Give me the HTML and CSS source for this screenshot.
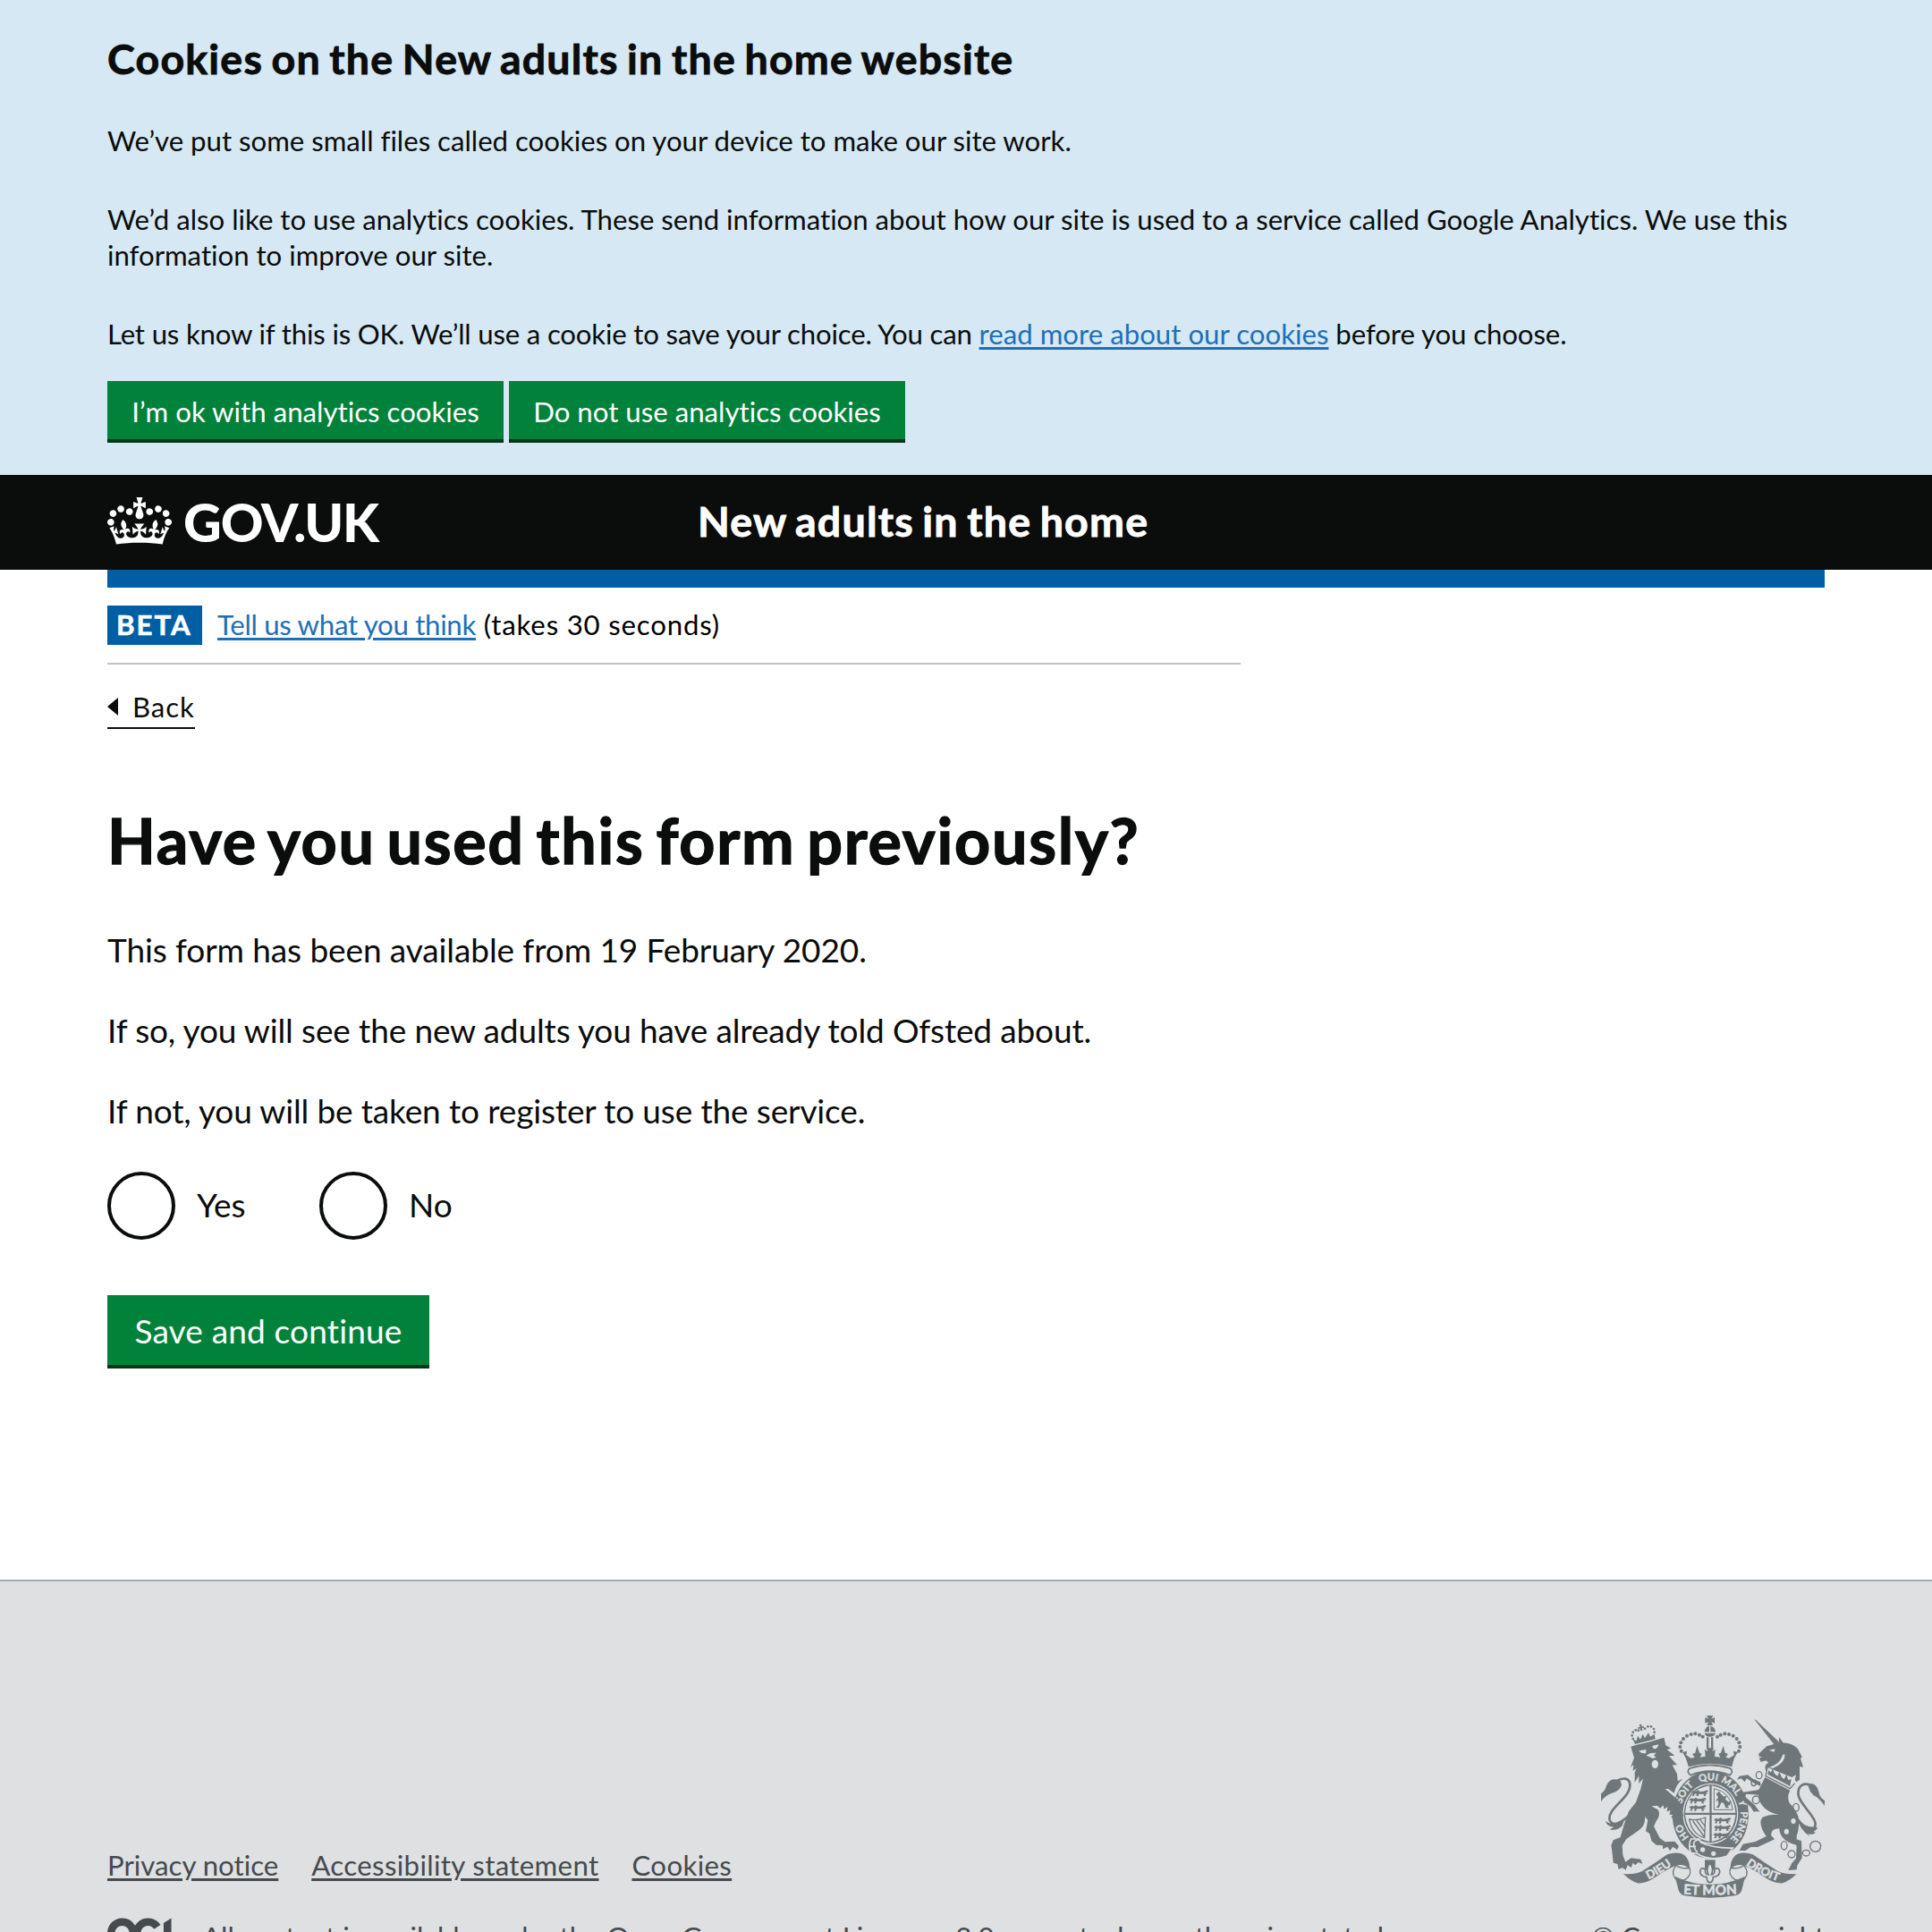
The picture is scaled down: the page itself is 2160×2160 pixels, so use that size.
FILE: index.html
```html
<!DOCTYPE html>
<html lang="en">
<head>
<meta charset="utf-8">
<title>Have you used this form previously?</title>
<link rel="stylesheet" href="styles.css">
</head>
<body>
<section class="cookie-banner">
  <div class="container">
    <h2 class="cookie-title">Cookies on the New adults in the home website</h2>
    <p class="cookie-text">We’ve put some small files called cookies on your device to make our site work.</p>
    <p class="cookie-text">We’d also like to use analytics cookies. These send information about how our site is used to a service called Google Analytics. We use this <br>information to improve our site.</p>
    <p class="cookie-text cookie-last"><span class="cookie-lead">Let us know if this is OK. We’ll use a cookie to save your choice. You can </span><a class="link cookie-link" href="#">read more about our cookies</a> before you choose.</p>
    <div class="cookie-actions">
      <button class="button button-small">I’m ok with analytics cookies</button>
      <button class="button button-small">Do not use analytics cookies</button>
    </div>
  </div>
</section>

<header class="header">
  <div class="container header-row">
    <a class="logo" href="#">
      <svg class="crown" viewBox="0 0 132 97" width="72" height="53" aria-hidden="true"><path fill="currentColor" fill-rule="evenodd" d="M25 30.2c3.5 1.5 7.7-.2 9.1-3.7 1.5-3.6-.2-7.8-3.9-9.2-3.6-1.4-7.6.3-9.1 3.9-1.4 3.5.3 7.5 3.9 9zM9 39.5c3.6 1.5 7.8-.2 9.2-3.7 1.5-3.6-.2-7.8-3.9-9.1-3.6-1.5-7.6.2-9.1 3.8-1.4 3.5.3 7.5 3.8 9zM4.4 57.2c3.5 1.5 7.7-.2 9.1-3.8 1.5-3.6-.2-7.7-3.9-9.1-3.5-1.5-7.6.3-9.1 3.8-1.4 3.5.3 7.6 3.9 9.1zm38.3-21.4c3.5 1.5 7.7-.2 9.1-3.8 1.5-3.6-.2-7.7-3.9-9.1-3.6-1.5-7.6.3-9.1 3.8-1.3 3.6.4 7.7 3.9 9.1zm64.4-5.6c-3.6 1.5-7.8-.2-9.1-3.7-1.5-3.6.2-7.8 3.8-9.2 3.6-1.4 7.7.3 9.2 3.9 1.3 3.5-.4 7.5-3.9 9zm15.9 9.3c-3.6 1.5-7.7-.2-9.1-3.7-1.5-3.6.2-7.8 3.7-9.1 3.6-1.5 7.7.2 9.2 3.8 1.5 3.5-.3 7.5-3.8 9zm4.7 17.7c-3.6 1.5-7.8-.2-9.2-3.8-1.5-3.6.2-7.7 3.9-9.1 3.6-1.5 7.7.3 9.2 3.8 1.3 3.5-.4 7.6-3.9 9.1zM89.3 35.8c-3.6 1.5-7.8-.2-9.2-3.8-1.4-3.6.2-7.7 3.9-9.1 3.6-1.5 7.7.3 9.2 3.8 1.4 3.6-.3 7.7-3.9 9.1zM69.7 17.7l8.9 4.7V9.3l-8.9 2.8c-.2-.3-.5-.6-.9-.9L72.4 0H59.6l3.5 11.2c-.3.3-.6.5-.9.9l-8.8-2.8v13.1l8.8-4.7c.3.3.6.7.9.9l-5 15.4v.1c-.2.8-.4 1.6-.4 2.4 0 4.1 3.1 7.5 7 8.1h.2c.3 0 .7.1 1 .1.4 0 .7 0 1-.1h.2c4-.6 7.1-4.1 7.1-8.1 0-.8-.1-1.7-.4-2.4V34l-5.1-15.4c.4-.2.7-.6 1-.9zM66 92.8c16.9 0 32.8 1.1 47.1 3.2 4-16.9 8.9-26.7 14-33.5l-9.6-3.4c1 4.9 1.1 7.2 0 10.2-1.5-1.4-3-4.3-4.2-8.7L108.6 76c2.8-2 5-3.2 7.5-3.3-4.4 9.4-10 11.9-13.6 11.2-4.3-.8-6.3-4.6-5.6-7.9 1-4.7 5.7-5.9 8-.5 4.3-8.7-3-11.4-7.6-8.8 7.1-7.2 7.9-13.5 2.1-21.1-8 6.1-8.1 12.3-4.5 20.8-4.7-5.4-12.1-2.5-9.5 6.2 3.4-5.2 7.9-2 7.2 3.1-.6 4.3-6.4 7.8-13.5 7.2-10.3-.9-10.9-8-11.2-13.8 2.5-.5 7.1 1.8 11 7.3L80.2 60c-4.1 4.4-8 5.3-12.3 5.4 1.4-4.4 8-11.6 8-11.6H55.5s6.4 7.2 7.9 11.6c-4.2-.1-8-1-12.3-5.4l1.4 16.4c3.9-5.5 8.5-7.7 10.9-7.3-.3 5.8-.9 12.8-11.1 13.8-7.2.6-12.9-2.9-13.5-7.2-.7-5 3.8-8.3 7.1-3.1 2.7-8.7-4.6-11.6-9.4-6.2 3.7-8.5 3.6-14.7-4.6-20.8-5.8 7.6-5 13.9 2.2 21.1-4.7-2.6-11.9.1-7.7 8.8 2.3-5.5 7.1-4.2 8.1.5.7 3.3-1.3 7.1-5.7 7.9-3.5.7-9-1.8-13.5-11.2 2.5.1 4.7 1.3 7.5 3.3l-4.7-15.4c-1.2 4.4-2.7 7.2-4.3 8.7-1.1-3-.9-5.3 0-10.2l-9.5 3.4c5 6.9 9.9 16.7 14 33.5 14.8-2.1 30.8-3.2 47.7-3.2z"/></svg>
      <span class="logo-text">GOV.UK</span>
    </a>
    <a class="service-name" href="#">New adults in the home</a>
  </div>
</header>

<div class="container main-wrap">
  <div class="blue-bar"></div>
  <div class="phase-banner">
    <strong class="phase-tag">BETA</strong>
    <span class="phase-text"><a class="link phase-link" href="#">Tell us what you think</a> (takes 30 seconds)</span>
  </div>
  <a class="back-link" href="#">Back</a>
  <main class="content">
    <h1 class="heading">Have you used this form previously?</h1>
    <p class="body-text">This form has been available from 19 February 2020.</p>
    <p class="body-text next">If so, you will see the new adults you have already told Ofsted about.</p>
    <p class="body-text next">If not, you will be taken to register to use the service.</p>
    <div class="radios">
      <label class="radio"><input class="radio-input" type="radio" name="used"><span class="radio-label">Yes</span></label>
      <label class="radio"><input class="radio-input" type="radio" name="used"><span class="radio-label">No</span></label>
    </div>
    <button class="button button-main">Save and continue</button>
  </main>
</div>

<footer class="footer">
  <div class="container footer-row">
    <div class="footer-meta">
      <nav class="footer-links">
        <a class="footer-link" href="#">Privacy notice</a>
        <a class="footer-link spaced" href="#">Accessibility statement</a>
        <a class="footer-link spaced" href="#">Cookies</a>
      </nav>
      <div class="licence">
        <svg viewBox="0 0 483.2 195.7" width="82" height="34" aria-hidden="true"><path fill="currentColor" d="M421.5 142.8V.1l-50.7 32.3v161.1h112.4v-50.7zm-122.3-9.6A47.12 47.12 0 0 1 221 97.8c0-26 21.1-47.1 47.1-47.1 16.7 0 31.4 8.7 39.7 21.8l42.7-27.2A97.63 97.63 0 0 0 268.1 0c-36.5 0-68.3 20.1-85.1 49.7A98 98 0 0 0 97.8 0C43.9 0 0 43.9 0 97.8s43.9 97.8 97.8 97.8c36.5 0 68.3-20.1 85.1-49.7a97.76 97.76 0 0 0 149.6 25.4l19.4 22.2h3v-87.8h-80l24.3 27.5zM97.8 145c-26 0-47.1-21.1-47.1-47.1s21.1-47.1 47.1-47.1 47.1 21.1 47.1 47.1S123.8 145 97.8 145"/></svg>
        <span>All content is available under the <a class="licence-link" href="#">Open Government Licence v3.0</a>, except where otherwise stated</span>
      </div>
    </div>
    <div class="crest">
      <svg class="arms" viewBox="90 54 750 612" width="250" height="204" aria-hidden="true">
        <defs>
          <path id="garter" d="M457 495A101 112 0 0 1 356 383A101 112 0 0 1 457 271A101 112 0 0 1 558 383A101 112 0 0 1 457 495"/>
          <path id="motto-left" d="M232 611Q290 588 342 544"/>
          <path id="motto-mid" d="M350 651Q455 660 562 651"/>
          <path id="motto-right" d="M564 546Q620 590 696 614"/>
          <g id="passant"><path d="M0 8L8 2L16 5L22 0L30 5L42 4L54 0L58 6L50 9L56 14L48 13L50 20L43 20L42 13L26 13L24 20L17 20L19 13L12 12L10 20L3 19L7 12Z"/></g>
        </defs>

        <!-- garter and shield -->
        <ellipse cx="457" cy="386" rx="128" ry="147"/>
        <ellipse class="pale" cx="457" cy="383" rx="93" ry="102"/>
        <ellipse cx="457" cy="383" rx="89" ry="98"/>
        <path class="pale" d="M454 289V380H372Q378 302 454 289ZM461 289V380H541Q536 302 461 289ZM372 387H454V477Q380 462 372 387ZM461 387H541Q534 462 461 477Z"/>
        <use href="#passant" x="392" y="304"/><use href="#passant" x="385" y="329"/><use href="#passant" x="385" y="354"/>
        <use href="#passant" x="468" y="396"/><use href="#passant" x="468" y="421"/><use href="#passant" x="466" y="446"/>
        <path class="line3" d="M469 299Q524 310 532 370H469Z"/>
        <path d="M476 317L486 308L493 318L502 326L512 322L507 335L518 344L526 340L522 354L514 357L520 364H508L503 350L494 344L486 362L476 364L484 352L482 338L474 342L483 328Z"/>
        <path class="line4" d="M386 402Q410 408 440 396L437 464Q395 452 386 402ZM398 408L435 459M410 405L437 443M422 403L438 424"/>

        <g class="pale garter-text">
          <text><textPath href="#garter" startOffset="16%">HO</textPath></text>
          <text><textPath href="#garter" startOffset="35.5%">SOIT</textPath></text>
          <text><textPath href="#garter" startOffset="49%">QUI</textPath></text>
          <text><textPath href="#garter" startOffset="60.5%">MAL</textPath></text>
          <text><textPath href="#garter" startOffset="70%">Y</textPath></text>
          <text><textPath href="#garter" startOffset="81.5%">PENSE</textPath></text>
        </g>
        <path class="edged" d="M392 468Q380 490 392 515L410 516Q455 545 512 526L532 498Q470 500 425 480L418 468Z"/>
        <circle class="pale" cx="431" cy="504" r="8"/><circle class="pale" cx="467" cy="517" r="8"/>
        <path class="pale-line" d="M424 470Q396 470 402 492Q404 506 414 512M386 493H408"/>

        <!-- royal crown -->
        <g transform="translate(330 45)">
          <path d="M114 9H136L130 20L141 15V35L130 30L135 42H115L120 30L109 35V15L120 20Z"/>
          <path d="M107 64Q110 44 123 44V64ZM127 44Q142 46 144 64H127ZM107 68H144Q140 80 125 80Q110 80 107 68Z"/>
          <path d="M114 82H121V120H114ZM129 82H136V120H129Z"/>
          <g><circle cx="29" cy="128" r="6"/><circle cx="25" cy="114" r="6"/><circle cx="28" cy="100" r="6"/><circle cx="36" cy="87" r="6"/><circle cx="48" cy="77" r="6"/><circle cx="62" cy="72" r="6"/><circle cx="76" cy="70" r="6"/><circle cx="90" cy="74" r="6"/><circle cx="101" cy="80" r="6"/>
          <circle cx="222" cy="128" r="6"/><circle cx="226" cy="114" r="6"/><circle cx="223" cy="100" r="6"/><circle cx="215" cy="87" r="6"/><circle cx="203" cy="77" r="6"/><circle cx="189" cy="72" r="6"/><circle cx="175" cy="70" r="6"/><circle cx="161" cy="74" r="6"/><circle cx="150" cy="80" r="6"/></g>
          <path d="M33 132L48 128L46 142L62 152L74 149L66 138L76 134L82 110L90 134L98 137L92 149L110 146L108 122L118 130L114 118H138L133 130L143 122L141 146L160 149L154 137L162 134L170 110L176 134L186 138L178 149L190 152L206 142L204 128L219 132Q204 150 199 181Q125 160 53 181Q46 150 33 132Z"/>
          <path class="edged-rev" d="M58 186Q125 164 193 186Q206 196 192 209Q125 182 60 209Q44 196 58 186Z"/>
        </g>

        <!-- lion -->
        <g transform="translate(75 60)">
          <path d="M143 24L152 23L150 31L158 29L159 36L152 35L154 44L146 45L147 37L140 40L139 32L146 33Z"/>
          <g><circle cx="122" cy="72" r="4"/><circle cx="119" cy="61" r="4"/><circle cx="122" cy="50" r="4"/><circle cx="131" cy="43" r="4"/><circle cx="140" cy="44" r="4"/><circle cx="162" cy="38" r="4"/><circle cx="172" cy="31" r="4"/><circle cx="183" cy="31" r="4"/><circle cx="192" cy="39" r="4"/><circle cx="194" cy="50" r="4"/></g>
          <path d="M129 90L122 74L134 79L138 62L147 74L155 56L162 70L174 52L180 65L194 56L197 73Z"/>
          <path d="M115 98L135 92L180 82L226 68L232 94L250 104L236 108L262 128L243 130L270 160L254 160L270 190L272 214L290 206Q264 228 262 256L240 240L230 240L272 276L284 300L291 330L284 352L270 350L274 338L262 344L250 335L258 326L244 326L248 312L236 316L238 300L226 308L224 295L213 305L204 296L184 298L206 310Q216 328 200 348L192 366L212 405L230 418L262 416L276 432L270 444L256 434L246 448L238 434L222 442L222 430L200 428L184 414L178 390L165 382L172 345L162 332Q166 362 140 380L100 408L86 430L88 462L97 485L116 472L148 476L154 492L140 486L130 496L122 488L116 504L104 496L98 512L86 504L74 510L70 492L56 488L52 450L49 430L56 412L80 402L92 360L108 315L132 285L148 240L156 205L142 222L142 196L128 218L128 185L134 170L122 180L124 158L114 168L126 136L120 116Z"/>
          <path class="pale" d="M142 112L166 108L166 120Q150 124 142 112ZM186 96L208 91Q206 106 192 106ZM166 128L180 120L200 119L192 128L200 134L188 138L176 132Z"/>
          <ellipse class="pale" cx="196" cy="157" rx="11" ry="14"/>
          <path class="tail" d="M116 322Q60 378 44 345C34 306 112 272 112 228C112 200 86 202 66 214"/>
          <path d="M80 214Q46 196 32 232Q28 248 15 256V282Q28 262 52 254Q78 248 84 226ZM30 347Q50 366 92 346L86 364Q68 382 44 376L58 368Q34 366 30 347Z"/>
          <path class="pale-line" d="M262 256Q270 226 290 210"/>
        </g>

        <!-- unicorn -->
        <g transform="translate(540 45)">
          <path d="M64 22L70 25L146 97L132 108Z"/>
          <path d="M78 138L106 112L128 106L146 98L148 82L160 100L176 102Q204 108 214 128L224 148L219 154L228 182L216 180L216 224L206 232L200 226L204 208L190 216L108 183L104 196L100 184L104 172L112 168L104 160L86 164L80 152L90 148L80 146Z"/>
          <path class="pale" d="M113 125L134 121L130 131ZM166 138Q168 162 144 176L126 186L114 182Q150 172 160 140Z"/>
          <path class="line4" d="M108 184L102 212L184 254L200 236"/>
          <path d="M109 206L112 192L119 200L126 188L132 204L142 212L148 198L156 216L164 222L172 206L178 226L188 222L184 246Z"/>
          <path d="M100 216L184 260Q172 282 182 302Q206 328 212 350Q216 390 206 412L206 424L222 430L224 486L208 512L206 526L178 528L190 504L204 488L206 444Q150 430 148 388Q120 388 120 410L132 424L76 450L52 450L34 462L14 462L26 440L68 432L104 414Q74 370 92 350Q116 338 146 342Q94 330 80 292L76 262L84 248Z"/>
          <path d="M86 246L66 238L38 220L32 232L20 220L6 224L14 212L42 208L60 222L84 232Z"/>
          <path d="M88 276L62 274L36 272L34 282L66 310L82 332L70 330L62 332L52 316L22 290L26 266L80 258Z"/>
          <path class="tail" d="M210 358Q244 400 262 388C292 364 216 310 212 276C208 242 232 232 256 244"/>
          <path d="M244 238Q272 232 280 264Q282 284 300 294V312Q286 288 262 276Q250 266 246 250ZM206 350Q226 386 276 384Q274 394 262 398L270 402Q254 412 244 404L250 414Q216 392 206 350Z"/>
          <g class="ring"><ellipse cx="80" cy="209" rx="10" ry="12"/><ellipse cx="62" cy="235" rx="8" ry="10"/><ellipse cx="70" cy="292" rx="12" ry="13"/><ellipse cx="204" cy="317" rx="10" ry="13"/><ellipse cx="164" cy="445" rx="10" ry="14"/><ellipse cx="189" cy="474" rx="12" ry="12"/><ellipse cx="238" cy="470" rx="12" ry="10"/><circle cx="269" cy="448" r="18"/></g>
          <ellipse class="pale" cx="195" cy="363" rx="8" ry="9"/><ellipse class="pale" cx="172" cy="398" rx="8" ry="9"/>
        </g>

        <!-- scroll -->
        <g id="scroll-half">
          <path d="M165 585Q200 588 228 576Q270 550 312 520Q350 508 372 524Q390 544 386 568Q370 552 344 556Q310 570 272 596Q240 618 212 616Q188 608 165 585Z"/>
          <path class="line4" d="M344 556Q322 576 338 600Q350 612 372 604Q398 588 385 562M344 556Q352 568 384 566"/>
        </g>
        <use href="#scroll-half" transform="matrix(-1 0 0 1 911 0)"/>
        <path d="M338 594Q400 622 455 620Q510 622 573 594L562 640Q558 654 540 658Q455 672 370 658Q354 654 350 640Z"/>
        <g class="pale motto-text">
          <text><textPath href="#motto-left" startOffset="50%">DIEU</textPath></text>
          <text><textPath href="#motto-right" startOffset="50%">DROIT</textPath></text>
          <text class="motto-big"><textPath href="#motto-mid" startOffset="50%">ET MON</textPath></text>
        </g>
        <path d="M438 538H473V572H438Z"/>
        <path class="lily" d="M455 548Q470 566 460 588Q474 586 470 570Q486 560 488 578Q488 592 466 596L464 606Q462 614 455 614Q448 614 446 606L444 596Q422 592 422 578Q424 560 440 570Q436 586 450 588Q440 566 455 548Z"/>
      </svg>
      <span class="copyright">© Crown copyright</span>
    </div>
  </div>
</footer>
</body>
</html>
```
FILE: styles.css
```css
* { box-sizing: border-box; }

html, body { margin: 0; height: 2160px; overflow: hidden; }

body {
  background: #fff;
  color: #0b0c0c;
  font-family: Lato, "Liberation Sans", sans-serif;
  font-size: 31.2px;
  line-height: 40px;
  font-variant-ligatures: none;
}

h1, h2, p { margin: 0; }
a { color: inherit; text-decoration: none; }

.container { width: 1920px; margin: 0 auto; }

.link {
  color: #1d70b8;
  text-decoration: underline;
  text-decoration-thickness: 3px;
  text-underline-offset: 3px;
}

/* Cookie banner */
.cookie-banner { background: #d5e8f3; padding: 40px 0 36px; }
.cookie-title {
  margin-bottom: 47px;
  font-size: 46.5px;
  line-height: 50px;
  letter-spacing: 1.2px;
  word-spacing: -3px;
  -webkit-text-stroke: .9px currentColor;
}
.cookie-text { margin-bottom: 48px; letter-spacing: -.02px; white-space: nowrap; }
.cookie-last { margin-bottom: 33px; letter-spacing: -.1px; }
.cookie-lead { letter-spacing: -.19px; }
.cookie-link { letter-spacing: 0; }
.cookie-actions { display: flex; gap: 6px; }

.button {
  display: block;
  border: 0;
  border-bottom: 4px solid #003618;
  background: #00823b;
  color: #fff;
  font: inherit;
  font-variant-ligatures: none;
  white-space: nowrap;
}
.button-small { width: 443px; padding: 14px 0 11px; }
.button-main {
  width: 360px;
  margin-top: 62px;
  padding: 15px 0 13px;
  font-size: 37px;
  line-height: 50px;
  letter-spacing: .17px;
}

/* Header */
.header { background: #0b0c0c; color: #fff; }
.header-row { display: grid; grid-template-columns: 660px 1fr; height: 106px; }
.logo { display: flex; align-items: flex-start; gap: 13px; padding-top: 25px; }
.logo-text {
  margin-top: -2px;
  font-size: 59px;
  font-weight: 900;
  line-height: 60px;
  letter-spacing: -1.1px;
}
.service-name {
  padding-top: 26px;
  font-size: 46.5px;
  font-weight: 700;
  line-height: 50px;
  letter-spacing: 1.2px;
  word-spacing: -3px;
  -webkit-text-stroke: .9px currentColor;
}

/* Phase banner */
.blue-bar { height: 20px; background: #005ea5; }
.phase-banner {
  display: flex;
  align-items: flex-start;
  gap: 17px;
  width: 1267px;
  padding: 20px 0;
  border-bottom: 2px solid #bfc1c3;
}
.phase-tag {
  width: 106px;
  height: 44px;
  padding: 1px 0 0 10px;
  background: #005ea5;
  color: #fff;
  letter-spacing: 2px;
  -webkit-text-stroke: .6px currentColor;
}
.phase-text { padding-top: 1px; color: #000; letter-spacing: .8px; }
.phase-link { letter-spacing: -.3px; }

.back-link {
  display: flex;
  align-items: center;
  width: 98px;
  height: 45px;
  margin-top: 27px;
  padding-bottom: 3px;
  border-bottom: 2px solid #0b0c0c;
  letter-spacing: .9px;
}
.back-link::before {
  content: "";
  margin-right: 16px;
  border: solid transparent;
  border-width: 10px 12px 10px 0;
  border-right-color: #0b0c0c;
}

/* Question */
.heading {
  margin: 84px 0 58px;
  font-size: 70px;
  line-height: 80px;
  letter-spacing: 1.75px;
  word-spacing: -6px;
  -webkit-text-stroke: 1.4px currentColor;
}
.body-text { font-size: 37px; line-height: 50px; letter-spacing: -.1px; }
.next { margin-top: 40px; letter-spacing: -.14px; }

.radios { display: flex; margin-top: 43px; }
.radio {
  display: flex;
  align-items: center;
  gap: 24px;
  width: 237px;
  font-size: 37px;
  line-height: 50px;
}
.radio-label { padding-bottom: 2px; }
.radio-input {
  appearance: none;
  width: 76px;
  height: 76px;
  margin: 0;
  border: 4px solid #0b0c0c;
  border-radius: 50%;
  background: #fff;
}

/* Footer */
.footer {
  height: 394px;
  margin-top: 236px;
  overflow: hidden;
  border-top: 2px solid #a1acb2;
  background: #dee0e2;
  color: #454a4d;
}
.footer-row { display: flex; justify-content: space-between; padding-top: 150px; }
.footer-meta { padding-top: 147px; }
.footer-links { display: flex; gap: 37px; margin-bottom: 40px; }
.footer-link {
  text-decoration: underline;
  text-decoration-thickness: 3px;
  text-underline-offset: 3px;
}
.spaced { letter-spacing: .35px; }
.licence { display: flex; gap: 24px; white-space: nowrap; }
.licence svg { flex: none; margin-top: -1px; }
.licence-link { text-decoration: underline; }
.crest { display: flex; flex-direction: column; align-items: flex-end; gap: 23px; }
.copyright { letter-spacing: -.05px; white-space: nowrap; }

/* Coat of arms */
.arms { display: block; fill: #6f777b; }
.arms .pale { fill: #dee0e2; }
.arms .edged { stroke: #dee0e2; stroke-width: 5; }
.arms .edged-rev { fill: #dee0e2; stroke: #6f777b; stroke-width: 5; }
.arms .pale-line { fill: none; stroke: #dee0e2; stroke-width: 5; }
.arms .line3 { fill: none; stroke: #6f777b; stroke-width: 3; }
.arms .line4 { fill: none; stroke: #6f777b; stroke-width: 4; }
.arms .tail { fill: none; stroke: #6f777b; stroke-width: 8; }
.arms .ring { fill: none; stroke: #6f777b; stroke-width: 4; }
.arms .lily { fill: #dee0e2; stroke: #6f777b; stroke-width: 5; }
.garter-text { font-size: 33px; font-weight: 700; text-anchor: middle; stroke: #dee0e2; stroke-width: 1; }
.motto-text { font-size: 39px; font-weight: 700; text-anchor: middle; stroke: #dee0e2; stroke-width: 1.5; }
.motto-big { font-size: 46px; }
```
